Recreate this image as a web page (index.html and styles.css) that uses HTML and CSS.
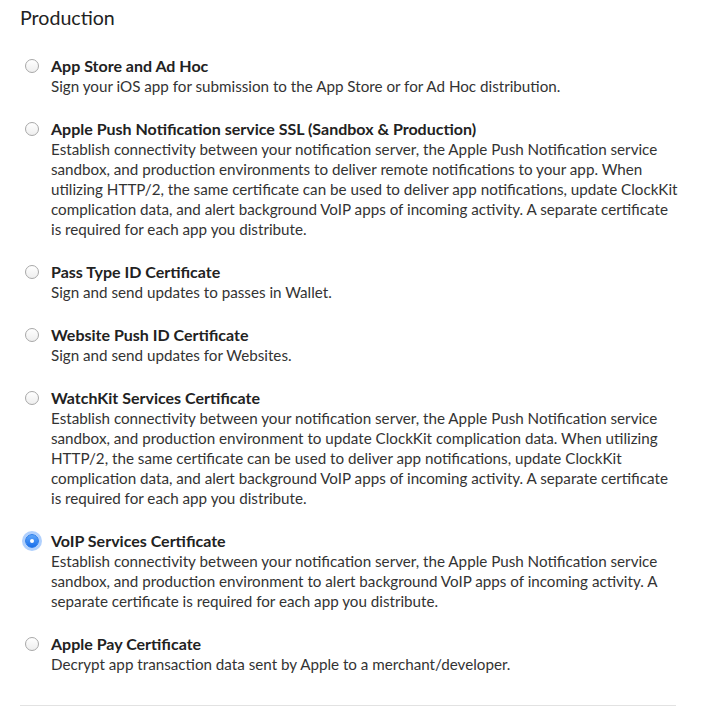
FILE: index.html
```html
<!DOCTYPE html>
<html>
<head>
<meta charset="utf-8">
<link rel="stylesheet" href="styles.css">
</head>
<body>
<div class="page">
  <h2 class="heading">Production</h2>
  <ul class="options">
    <li class="option">
      <span class="radio"></span>
      <div class="text">
        <div class="title">App Store and Ad Hoc</div>
        <div class="desc">Sign your iOS app for submission to the App Store or for Ad Hoc distribution.</div>
      </div>
    </li>
    <li class="option">
      <span class="radio"></span>
      <div class="text">
        <div class="title">Apple Push Notification service SSL (Sandbox &amp; Production)</div>
        <div class="desc">Establish connectivity between your notification server, the Apple Push Notification service<br>sandbox, and production environments to deliver remote notifications to your app. When<br>utilizing HTTP/2, the same certificate can be used to deliver app notifications, update ClockKit<br>complication data, and alert background VoIP apps of incoming activity. A separate certificate<br>is required for each app you distribute.</div>
      </div>
    </li>
    <li class="option">
      <span class="radio"></span>
      <div class="text">
        <div class="title">Pass Type ID Certificate</div>
        <div class="desc">Sign and send updates to passes in Wallet.</div>
      </div>
    </li>
    <li class="option">
      <span class="radio"></span>
      <div class="text">
        <div class="title">Website Push ID Certificate</div>
        <div class="desc">Sign and send updates for Websites.</div>
      </div>
    </li>
    <li class="option">
      <span class="radio"></span>
      <div class="text">
        <div class="title">WatchKit Services Certificate</div>
        <div class="desc">Establish connectivity between your notification server, the Apple Push Notification service<br>sandbox, and production environment to update ClockKit complication data. When utilizing<br>HTTP/2, the same certificate can be used to deliver app notifications, update ClockKit<br>complication data, and alert background VoIP apps of incoming activity. A separate certificate<br>is required for each app you distribute.</div>
      </div>
    </li>
    <li class="option">
      <span class="radio checked"></span>
      <div class="text">
        <div class="title">VoIP Services Certificate</div>
        <div class="desc">Establish connectivity between your notification server, the Apple Push Notification service<br>sandbox, and production environment to alert background VoIP apps of incoming activity. A<br>separate certificate is required for each app you distribute.</div>
      </div>
    </li>
    <li class="option">
      <span class="radio"></span>
      <div class="text">
        <div class="title">Apple Pay Certificate</div>
        <div class="desc">Decrypt app transaction data sent by Apple to a merchant/developer.</div>
      </div>
    </li>
  </ul>
  <div class="rule"></div>
</div>
</body>
</html>
```

FILE: styles.css
```css
html, body {
  margin: 0;
  padding: 0;
  background: #ffffff;
}
body {
  font-family: "Lato", "Open Sans", sans-serif;
  color: #333333;
}
.page {
  padding: 6px 0 0 20px;
  width: 656px;
}
.heading {
  margin: 0;
  font-size: 19.6px;
  font-weight: 400;
  line-height: 24px;
  color: #222;
}
.options {
  list-style: none;
  margin: 25px 0 0 0;
  padding: 0 0 0 5px;
}
.option {
  display: flex;
  align-items: flex-start;
  gap: 12px;
  margin-bottom: 22px;
}
.radio {
  flex: 0 0 auto;
  width: 14px;
  height: 14px;
  margin-top: 4px;
  border-radius: 50%;
  border: 1px solid #a8a8a8;
  background: linear-gradient(#ffffff, #eeeeee);
  box-sizing: border-box;
  position: relative;
}
.radio.checked {
  border: 1px solid #2a7be8;
  background: linear-gradient(#5ea6fb, #1a6fea);
  box-shadow: 0 0 0 3px rgba(80, 150, 250, 0.45);
}
.radio.checked::after {
  content: "";
  position: absolute;
  left: 50%;
  top: 50%;
  width: 4px;
  height: 4px;
  margin: -2px 0 0 -2px;
  border-radius: 50%;
  background: #ffffff;
}
.title {
  font-size: 16px;
  font-weight: 700;
  line-height: 21px;
  color: #222;
}
.desc {
  font-size: 15.2px;
  line-height: 20px;
  color: #333;
  white-space: nowrap;
}
.rule {
  height: 1px;
  background: #e2e2e2;
  margin-top: 31px;
}
```
